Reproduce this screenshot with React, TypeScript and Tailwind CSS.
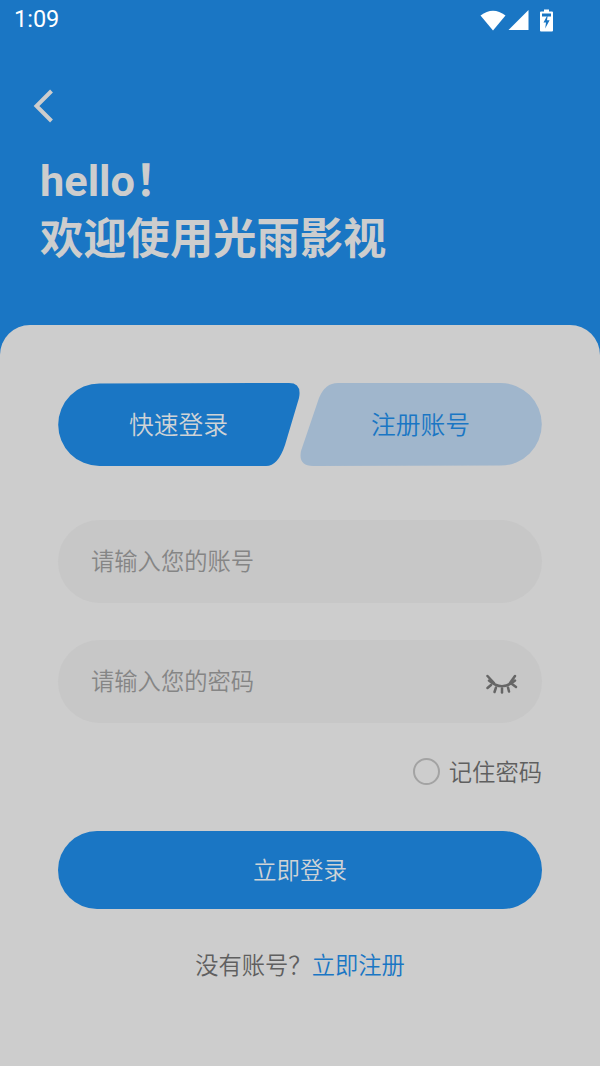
const font = { fontFamily: '"Noto Sans CJK SC", sans-serif' };

const StatusIcons = () => (
    <div className="flex items-center">
        <svg width="26" height="22" viewBox="0 0 26 22">
            <path d="M0.5 6.5 Q13 -3 25.5 6.5 L13 21.5 Z" fill="#fff" />
        </svg>
        <svg width="21" height="22" viewBox="0 0 21 22" className="ml-[2px]">
            <path d="M0.5 21 L20.5 1 V21 Z" fill="#fff" />
        </svg>
        <svg width="13" height="23" viewBox="0 0 13 23" className="ml-[11px]">
            <path d="M4 0.5 H9 V2.5 H12 Q13 2.5 13 3.5 V21.5 Q13 22.5 12 22.5 H1 Q0 22.5 0 21.5 V3.5 Q0 2.5 1 2.5 H4 Z" fill="#fff" />
            <rect x="2" y="4.5" width="9" height="3" fill="#1a76c4" />
            <path d="M7.8 5.5 L3.5 13.4 H6 L5.2 19.5 L9.6 11.2 H7 Z" fill="#1a76c4" />
        </svg>
    </div>
);

const LeftTab = () => (
    <div className="relative flex h-[83px] w-[242px] items-center justify-center">
        <svg className="absolute inset-0" width="242" height="83" viewBox="0 0 242 83">
            <path d="M41.5 0.4 L231 0 Q244 0 241 15 L227 62 Q220 83 208 83 L41.5 83 A41.3 41.3 0 0 1 41.5 0.4 Z" fill="#1a76c4" />
        </svg>
        <span className="relative pb-[2px] pr-[1px] text-[24.8px] font-[350] text-[#cfd3d6]">快速登录</span>
    </div>
);

const RightTab = () => (
    <div className="relative flex h-[83px] w-[242px] items-center justify-center">
        <svg className="absolute inset-0" width="242" height="83" viewBox="0 0 242 83">
            <path d="M200.5 0 L38 0 Q25 0 19 15 L1 68 Q-2 83 13 83 L200.5 82.6 A41.3 41.3 0 0 0 200.5 0 Z" fill="#a0b6cc" />
        </svg>
        <span className="relative pb-[2px] pr-[1px] text-[24.8px] font-[350] text-[#1a76c4]">注册账号</span>
    </div>
);

const EyeClosed = () => (
    <svg width="32" height="20" viewBox="0 0 32 20" fill="none" stroke="#666" strokeWidth="2.5" strokeLinecap="round">
        <path d="M3 6.5 Q16 18 29 6.5" />
        <path d="M1.5 2 L8 9" />
        <path d="M1.5 14 L5 11" />
        <path d="M8.5 18 L10 13.5" />
        <path d="M16 18.5 L16 14.5" />
        <path d="M23 17.5 L22 13.5" />
        <path d="M30 13 L26 10" />
        <path d="M29 2 L24 9" />
    </svg>
);

const App = () => {
    return (
        <div className="flex h-[1066px] w-[600px] flex-col overflow-hidden bg-[#1a76c4]" style={font}>
            <div className="flex h-[40px] shrink-0 items-center justify-between pl-[14px] pr-[47px]">
                <span className="text-[23.5px] text-white" style={{ fontFamily: 'Roboto, sans-serif' }}>1:09</span>
                <StatusIcons />
            </div>

            <div className="h-[285px] shrink-0 pl-[40px]">
                <svg width="24" height="36" viewBox="0 0 24 36" fill="none" stroke="#cdcdcd" strokeWidth="4" className="-ml-[9px] mt-[48px]">
                    <path d="M20.5 3 L5.5 18 L20.5 33" />
                </svg>
                <div className="mt-[29px] text-[43.3px] font-bold leading-[58px] text-[#cdcdcd]">
                    <div style={{ fontFamily: 'Roboto, "Noto Sans CJK SC", sans-serif' }}>hello！</div>
                    <div className="-mt-[5px]">欢迎使用光雨影视</div>
                </div>
            </div>

            <div className="flex flex-1 flex-col rounded-t-[30px] bg-[#cdcdcd] px-[58px] pt-[58px]">
                <div className="flex">
                    <LeftTab />
                    <RightTab />
                </div>

                <div className="mt-[54px] flex h-[83px] items-center rounded-full bg-[#c7c7c7] pb-[2px] pl-[33px] text-[23.3px] font-[350] text-[#858585]">
                    请输入您的账号
                </div>

                <div className="mt-[37px] flex h-[83px] items-center justify-between rounded-full bg-[#c7c7c7] pb-[2px] pl-[33px] pr-[24px] text-[23.3px] font-[350] text-[#858585]">
                    <span>请输入您的密码</span>
                    <span className="mt-[7px]"><EyeClosed /></span>
                </div>

                <div className="mt-[35px] flex items-center justify-end gap-[9px]">
                    <div className="h-[27px] w-[27px] rounded-full border-2 border-[#a3a3a3]" />
                    <span className="-mt-[2px] text-[23.3px] font-[350] leading-[28px] text-[#5f5f5f]">记住密码</span>
                </div>

                <div className="mt-[46px] flex h-[78px] items-center justify-center rounded-full bg-[#1a76c4] text-[23.5px] font-[350] text-[#cfd3d6]">
                    立即登录
                </div>

                <div className="mt-[38px] text-center text-[23.3px] font-[350] leading-[34px] text-[#5f5f5f]">
                    没有账号？<span className="text-[#1a76c4]">立即注册</span>
                </div>
            </div>
        </div>
    );
};

export default App;
